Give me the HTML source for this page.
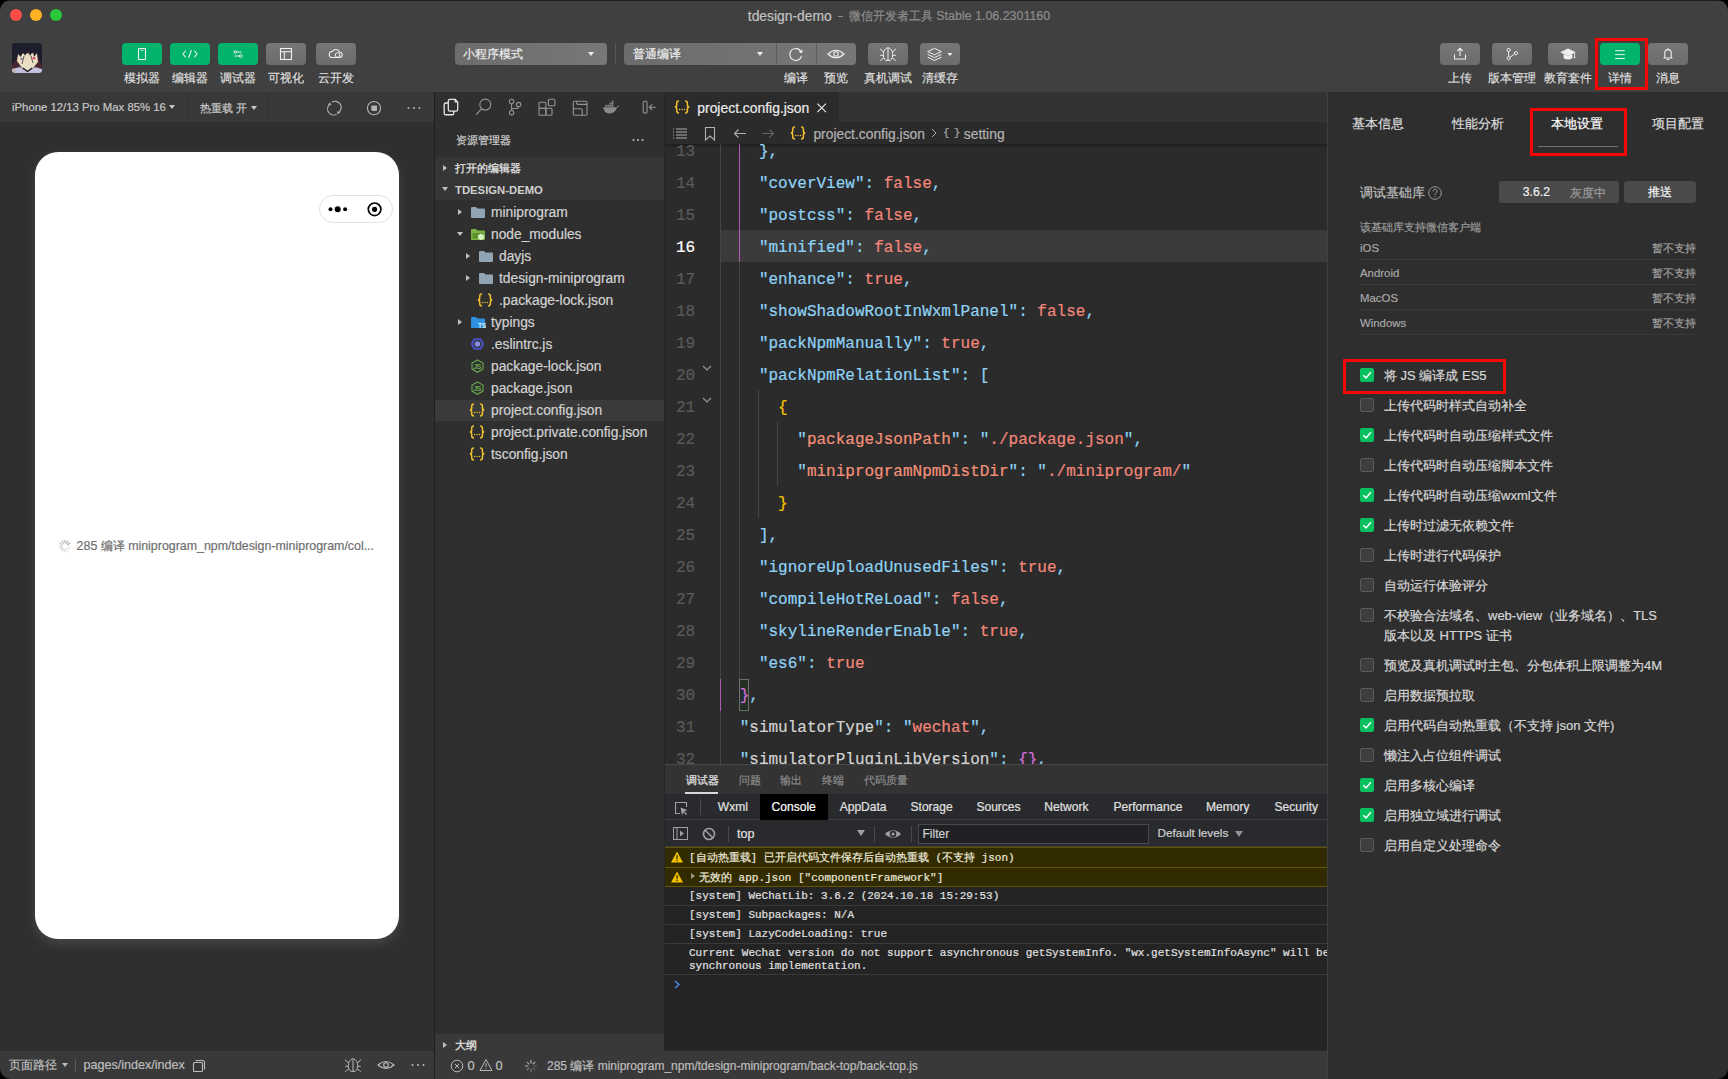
<!DOCTYPE html>
<html><head><meta charset="utf-8">
<style>
*{box-sizing:border-box;margin:0;padding:0}
html,body{width:1728px;height:1079px;overflow:hidden;background:#2e2e2e;font-family:"Liberation Sans",sans-serif;color:#d4d4d4}
.a{position:absolute}
.t{position:absolute;white-space:pre;-webkit-text-stroke:0.2px currentColor}
.m{font-family:"Liberation Mono",monospace}
</style></head><body>

<div class="a" style="left:0px;top:0px;width:1728px;height:92px;background:#404040;"></div>
<div class="a" style="left:0px;top:0px;width:1728px;height:1px;background:#1c1c1c;"></div>
<div class="a" style="left:9.8px;top:9.0px;width:12.4px;height:12.4px;border-radius:50%;background:#fe4d45"></div>
<div class="a" style="left:29.8px;top:9.0px;width:12.4px;height:12.4px;border-radius:50%;background:#feb224"></div>
<div class="a" style="left:49.8px;top:9.0px;width:12.4px;height:12.4px;border-radius:50%;background:#2ac73a"></div>
<div class="t" style="left:747.8px;top:5.8px;font-size:13.86px;line-height:20px;color:#c2c2c2;font-weight:400;letter-spacing:0px;">tdesign-demo</div>
<div class="a" style="left:838px;top:15.5px;width:5px;height:1px;background:#8d8d8d;"></div>
<div class="t" style="left:849.3px;top:6.8px;font-size:12px;line-height:18px;color:#8d8d8d;font-weight:400;letter-spacing:0px;">微信开发者工具</div>
<div class="t" style="left:936.3px;top:6.8px;font-size:12.45px;line-height:18px;color:#8d8d8d;font-weight:400;letter-spacing:0px;">Stable 1.06.2301160</div>
<svg class="a" style="left:12px;top:43px;" width="30" height="30" viewBox="0 0 30 30" fill="none"><defs><clipPath id="av"><rect width="30" height="30" rx="3"/></clipPath></defs>
<g clip-path="url(#av)"><rect width="30" height="30" fill="#46262f"/>
<path d="M6 11 L25 10 L26 19 L21 25 L15.5 28 L10 25 L5 18 Z" fill="#eadfc2"/>
<path d="M0 0 H30 V22 L27 16 L25 10 L22 14 L21 8 L18 13 L16 7 L13 13 L11 8 L9 14 L6 11 L4 17 L0 22 Z" fill="#1c1e2b"/>
<path d="M12 13 L10 21 M19 13 L21 20" stroke="#3a3440" stroke-width="0.8"/>
<ellipse cx="22" cy="15.3" rx="1.6" ry="1" fill="#ec2d72"/>
<ellipse cx="9.5" cy="15.8" rx="1.4" ry="0.9" fill="#7a68a0"/>
<path d="M0 30 V26 L8 24 L15.5 29 L23 24 L30 26 V30 Z" fill="#c4c0e0"/>
<path d="M11 25 L15.5 28.5 L20 25" stroke="#1c1e2b" stroke-width="1.2" fill="none"/>
<path d="M1 25 Q2 28 4 29" stroke="#c8a030" stroke-width="0.8" fill="none"/></g></svg>
<div class="a" style="left:122px;top:43px;width:40px;height:22px;border-radius:4px;background:#02b36b"></div>
<svg class="a" style="left:122px;top:43px;" width="40" height="22" viewBox="0 0 40 22" fill="none"><rect x="16.5" y="5.5" width="7" height="11" stroke="#f0f0f0" stroke-width="1.1" rx="0.5"/><line x1="18.5" y1="7.3" x2="21.5" y2="7.3" stroke="#f0f0f0" stroke-width="0.9"/></svg>
<div class="a" style="left:170px;top:43px;width:40px;height:22px;border-radius:4px;background:#02b36b"></div>
<svg class="a" style="left:170px;top:43px;" width="40" height="22" viewBox="0 0 40 22" fill="none"><path d="M15.5 8 L13 11 L15.5 14 M24.5 8 L27 11 L24.5 14 M21.3 7.5 L18.7 14.5" stroke="#f0f0f0" stroke-width="1.1" stroke-linecap="round"/></svg>
<div class="a" style="left:218px;top:43px;width:40px;height:22px;border-radius:4px;background:#02b36b"></div>
<svg class="a" style="left:218px;top:43px;" width="40" height="22" viewBox="0 0 40 22" fill="none"><circle cx="17.3" cy="9" r="1.3" stroke="#f0f0f0" stroke-width="1"/><line x1="18.8" y1="9" x2="23.5" y2="9" stroke="#f0f0f0" stroke-width="1"/><circle cx="22.7" cy="13" r="1.3" stroke="#f0f0f0" stroke-width="1"/><line x1="16.5" y1="13" x2="21.2" y2="13" stroke="#f0f0f0" stroke-width="1"/></svg>
<div class="a" style="left:266px;top:43px;width:40px;height:22px;border-radius:4px;background:linear-gradient(#767676,#6c6c6c)"></div>
<svg class="a" style="left:266px;top:43px;" width="40" height="22" viewBox="0 0 40 22" fill="none"><rect x="14.5" y="5.5" width="11" height="11" stroke="#f0f0f0" stroke-width="1.1"/><line x1="14.5" y1="8.7" x2="25.5" y2="8.7" stroke="#f0f0f0" stroke-width="1.1"/><line x1="18.3" y1="8.7" x2="18.3" y2="16.5" stroke="#f0f0f0" stroke-width="1.1"/></svg>
<div class="a" style="left:316px;top:43px;width:40px;height:22px;border-radius:4px;background:linear-gradient(#767676,#6c6c6c)"></div>
<svg class="a" style="left:316px;top:43px;" width="40" height="22" viewBox="0 0 40 22" fill="none"><path d="M16 14.5 a3 3 0 0 1 0.5-6 a3.8 3.8 0 0 1 7 0.8 a2.6 2.6 0 0 1 0.2 5.2 Z" stroke="#f0f0f0" stroke-width="1.1"/><circle cx="21.5" cy="12" r="2.3" stroke="#f0f0f0" stroke-width="1"/></svg>
<div class="t" style="left:82.0px;width:120px;text-align:center;top:69.0px;font-size:12px;line-height:18px;color:#dedede;font-weight:400;letter-spacing:0px;">模拟器</div>
<div class="t" style="left:130.0px;width:120px;text-align:center;top:69.0px;font-size:12px;line-height:18px;color:#dedede;font-weight:400;letter-spacing:0px;">编辑器</div>
<div class="t" style="left:178.0px;width:120px;text-align:center;top:69.0px;font-size:12px;line-height:18px;color:#dedede;font-weight:400;letter-spacing:0px;">调试器</div>
<div class="t" style="left:226.0px;width:120px;text-align:center;top:69.0px;font-size:12px;line-height:18px;color:#dedede;font-weight:400;letter-spacing:0px;">可视化</div>
<div class="t" style="left:276.0px;width:120px;text-align:center;top:69.0px;font-size:12px;line-height:18px;color:#dedede;font-weight:400;letter-spacing:0px;">云开发</div>
<div class="a" style="left:455px;top:43px;width:152px;height:22px;border-radius:4px;background:linear-gradient(90deg,#6c6c6c,#777777)"></div>
<div class="t" style="left:463px;top:45.0px;font-size:12px;line-height:18px;color:#ececec;font-weight:400;letter-spacing:0px;">小程序模式</div>
<div class="a" style="left:588px;top:52px;width:0;height:0;border-left:3.5px solid transparent;border-right:3.5px solid transparent;border-top:4px solid #eee"></div>
<div class="a" style="left:615px;top:43px;width:1px;height:22px;background:#565656;"></div>
<div class="a" style="left:624px;top:43px;width:232px;height:22px;border-radius:4px;background:linear-gradient(90deg,#6c6c6c,#777777)"></div>
<div class="a" style="left:776px;top:43px;width:1px;height:22px;background:#5e5e5e;"></div>
<div class="a" style="left:816px;top:43px;width:1px;height:22px;background:#5e5e5e;"></div>
<div class="t" style="left:632.5px;top:45.0px;font-size:12px;line-height:18px;color:#ececec;font-weight:400;letter-spacing:0px;">普通编译</div>
<div class="a" style="left:757px;top:52px;width:0;height:0;border-left:3.5px solid transparent;border-right:3.5px solid transparent;border-top:4px solid #eee"></div>
<svg class="a" style="left:776px;top:43px;" width="40" height="22" viewBox="0 0 40 22" fill="none"><path d="M25.3 9.2 A6 6 0 1 0 25.6 12.8" stroke="#f0f0f0" stroke-width="1.1"/><path d="M23.2 8.6 L25.6 9.4 L26 6.8" stroke="#f0f0f0" stroke-width="1.1"/></svg>
<svg class="a" style="left:816px;top:43px;" width="40" height="22" viewBox="0 0 40 22" fill="none"><path d="M12 11 Q20 3.5 28 11 Q20 18.5 12 11 Z" stroke="#f0f0f0" stroke-width="1.1"/><circle cx="20" cy="11" r="2.2" stroke="#f0f0f0" stroke-width="1.1"/></svg>
<div class="a" style="left:868px;top:43px;width:40px;height:22px;border-radius:4px;background:linear-gradient(#767676,#6c6c6c)"></div>
<svg class="a" style="left:868px;top:43px;" width="40" height="22" viewBox="0 0 40 22" fill="none"><path d="M20 4.6 Q15.3 6.2 15.3 11.5 Q15.3 17.6 20 17.6 Q24.7 17.6 24.7 11.5 Q24.7 6.2 20 4.6 Z" stroke="#f0f0f0" stroke-width="1"/><line x1="20" y1="5.5" x2="20" y2="17" stroke="#f0f0f0" stroke-width="1"/><path d="M15.6 8.6 L13.3 7.3 L12.3 5.6 M24.4 8.6 L26.7 7.3 L27.7 5.6 M15.2 12.3 H12.2 M24.8 12.3 H27.8 M15.6 15.3 L13.4 16.5 L12.3 17.8 M24.4 15.3 L26.6 16.5 L27.7 17.8" stroke="#f0f0f0" stroke-width="1"/></svg>
<div class="a" style="left:920px;top:43px;width:40px;height:22px;border-radius:4px;background:linear-gradient(#767676,#6c6c6c)"></div>
<svg class="a" style="left:920px;top:43px;" width="40" height="22" viewBox="0 0 40 22" fill="none"><path d="M14.5 5.4 L21.3 8.6 L14.5 11.8 L7.7 8.6 Z" stroke="#f0f0f0" stroke-width="1"/><path d="M7.7 11.4 L14.5 14.6 L21.3 11.4 M7.7 14.2 L14.5 17.4 L21.3 14.2" stroke="#f0f0f0" stroke-width="1"/><path d="M27.3 10 h5.2 l-2.6 3 z" fill="#f0f0f0"/></svg>
<div class="t" style="left:736.0px;width:120px;text-align:center;top:69.0px;font-size:12px;line-height:18px;color:#dedede;font-weight:400;letter-spacing:0px;">编译</div>
<div class="t" style="left:776.0px;width:120px;text-align:center;top:69.0px;font-size:12px;line-height:18px;color:#dedede;font-weight:400;letter-spacing:0px;">预览</div>
<div class="t" style="left:828.0px;width:120px;text-align:center;top:69.0px;font-size:12px;line-height:18px;color:#dedede;font-weight:400;letter-spacing:0px;">真机调试</div>
<div class="t" style="left:880.0px;width:120px;text-align:center;top:69.0px;font-size:12px;line-height:18px;color:#dedede;font-weight:400;letter-spacing:0px;">清缓存</div>
<div class="a" style="left:1440px;top:43px;width:40px;height:22px;border-radius:4px;background:linear-gradient(#767676,#6c6c6c)"></div>
<svg class="a" style="left:1440px;top:43px;" width="40" height="22" viewBox="0 0 40 22" fill="none"><path d="M14.5 11.5 v4.5 h11 v-4.5" stroke="#f0f0f0" stroke-width="1.1"/><path d="M20 13 V5.5 M17.3 8 L20 5.3 L22.7 8" stroke="#f0f0f0" stroke-width="1.1"/></svg>
<div class="a" style="left:1492px;top:43px;width:40px;height:22px;border-radius:4px;background:linear-gradient(#767676,#6c6c6c)"></div>
<svg class="a" style="left:1492px;top:43px;" width="40" height="22" viewBox="0 0 40 22" fill="none"><circle cx="16.6" cy="6.9" r="1.6" stroke="#f0f0f0" stroke-width="1"/><circle cx="16.6" cy="15.3" r="1.6" stroke="#f0f0f0" stroke-width="1"/><circle cx="23.9" cy="10.2" r="1.6" stroke="#f0f0f0" stroke-width="1"/><path d="M16.6 8.5 V13.7 M17.9 14.4 L22.6 11.1" stroke="#f0f0f0" stroke-width="1"/></svg>
<div class="a" style="left:1548px;top:43px;width:40px;height:22px;border-radius:4px;background:linear-gradient(#767676,#6c6c6c)"></div>
<svg class="a" style="left:1548px;top:43px;" width="40" height="22" viewBox="0 0 40 22" fill="none"><path d="M12.2 9.3 L20 5.6 L27.8 9.3 L20 13 Z" fill="#f0f0f0"/><path d="M15.6 11 v4.3 q4.4 2.6 8.8 0 v-4.3 l-4.4 2.1 z" fill="#f0f0f0"/><path d="M26.6 9.8 v4.2" stroke="#f0f0f0" stroke-width="0.9"/><circle cx="26.6" cy="14.4" r="0.8" fill="#f0f0f0"/></svg>
<div class="a" style="left:1600px;top:43px;width:40px;height:22px;border-radius:4px;background:#02b36b"></div>
<svg class="a" style="left:1600px;top:43px;" width="40" height="22" viewBox="0 0 40 22" fill="none"><path d="M15.1 7.7 h9.7 M15.1 11.6 h9.7 M15.1 15.5 h9.7" stroke="#f0f0f0" stroke-width="1"/></svg>
<div class="a" style="left:1648px;top:43px;width:40px;height:22px;border-radius:4px;background:linear-gradient(#767676,#6c6c6c)"></div>
<svg class="a" style="left:1648px;top:43px;" width="40" height="22" viewBox="0 0 40 22" fill="none"><path d="M15.5 15 h9 M16.8 15 v-5 a3.2 3.4 0 0 1 6.4 0 v5" stroke="#f0f0f0" stroke-width="1.1"/><path d="M18.8 16.5 h2.4" stroke="#f0f0f0" stroke-width="1.1"/><line x1="20" y1="5.3" x2="20" y2="6.6" stroke="#f0f0f0" stroke-width="1"/></svg>
<div class="t" style="left:1400.0px;width:120px;text-align:center;top:69.0px;font-size:12px;line-height:18px;color:#dedede;font-weight:400;letter-spacing:0px;">上传</div>
<div class="t" style="left:1452.0px;width:120px;text-align:center;top:69.0px;font-size:12px;line-height:18px;color:#dedede;font-weight:400;letter-spacing:0px;">版本管理</div>
<div class="t" style="left:1508.0px;width:120px;text-align:center;top:69.0px;font-size:12px;line-height:18px;color:#dedede;font-weight:400;letter-spacing:0px;">教育套件</div>
<div class="t" style="left:1560.0px;width:120px;text-align:center;top:69.0px;font-size:12px;line-height:18px;color:#dedede;font-weight:400;letter-spacing:0px;">详情</div>
<div class="t" style="left:1608.0px;width:120px;text-align:center;top:69.0px;font-size:12px;line-height:18px;color:#dedede;font-weight:400;letter-spacing:0px;">消息</div>
<div class="a" style="left:1595px;top:38px;width:53px;height:52px;border:3px solid #f70505"></div>
<div class="a" style="left:0px;top:92px;width:434px;height:987px;background:#2f2f2f;"></div>
<div class="a" style="left:0px;top:92px;width:434px;height:30px;background:#383838;"></div>
<div class="a" style="left:188px;top:92px;width:1px;height:30px;background:#333333;"></div>
<div class="a" style="left:267px;top:92px;width:1px;height:30px;background:#333333;"></div>
<div class="t" style="left:12px;top:98.5px;font-size:11.35px;line-height:17px;color:#c8c8c8;font-weight:400;letter-spacing:0px;">iPhone 12/13 Pro Max 85% 16</div>
<div class="a" style="left:169px;top:105px;width:0;height:0;border-left:3.5px solid transparent;border-right:3.5px solid transparent;border-top:4px solid #c8c8c8"></div>
<div class="t" style="left:200px;top:99.5px;font-size:11px;line-height:16px;color:#c8c8c8;font-weight:400;letter-spacing:0px;">热重载 开</div>
<div class="a" style="left:250.5px;top:105.5px;width:0;height:0;border-left:3.5px solid transparent;border-right:3.5px solid transparent;border-top:4px solid #c8c8c8"></div>
<svg class="a" style="left:324px;top:98px;" width="20" height="20" viewBox="0 0 20 20" fill="none"><path d="M7.8 4.2 A6.1 6.1 0 0 1 14.9 14.1 M12.6 16.3 A6.1 6.1 0 0 1 5.5 6.5" stroke="#b4b4b4" stroke-width="1.1"/><path d="M14.2 16.2 L12.6 13.6 L16.4 13.9 Z M5.8 4.4 L7.6 6.9 L3.9 6.8 Z" fill="#b4b4b4"/></svg>
<svg class="a" style="left:364px;top:98px;" width="20" height="20" viewBox="0 0 20 20" fill="none"><circle cx="10" cy="10.1" r="6.6" stroke="#b4b4b4" stroke-width="1.1"/><rect x="7.3" y="7.6" width="5.7" height="5.3" rx="0.8" fill="#b4b4b4"/></svg>
<svg class="a" style="left:404px;top:98px;" width="20" height="20" viewBox="0 0 20 20" fill="none"><circle cx="4.5" cy="10" r="1" fill="#b4b4b4"/><circle cx="10" cy="10" r="1" fill="#b4b4b4"/><circle cx="15.5" cy="10" r="1" fill="#b4b4b4"/></svg>
<div class="a" style="left:434px;top:92px;width:1px;height:987px;background:#1f1f1f;"></div>
<div class="a" style="left:35px;top:152px;width:364px;height:787px;border-radius:23px;background:#ffffff;box-shadow:0 5px 11px rgba(255,255,255,0.11)"></div>
<div class="a" style="left:319px;top:195px;width:74px;height:28px;border-radius:14px;border:1px solid #e3e3e3;background:#fff"></div>
<svg class="a" style="left:319px;top:195px;" width="74" height="28" viewBox="0 0 74 28" fill="none"><circle cx="11.5" cy="14.3" r="2" fill="#000"/><circle cx="18.7" cy="14.3" r="3" fill="#000"/><circle cx="26.1" cy="14.3" r="2" fill="#000"/><circle cx="55.6" cy="14.3" r="6.3" stroke="#000" stroke-width="1.7"/><circle cx="55.6" cy="14.3" r="2.6" fill="#000"/></svg>
<svg class="a" style="left:55.3px;top:535.7px;" width="20" height="20" viewBox="0 0 20 20" fill="none"><line x1="13.20" y1="10.00" x2="15.60" y2="10.00" stroke="rgba(0,0,0,0.08)" stroke-width="1.2" stroke-linecap="round"/><line x1="12.77" y1="11.60" x2="14.85" y2="12.80" stroke="rgba(0,0,0,0.11)" stroke-width="1.2" stroke-linecap="round"/><line x1="11.60" y1="12.77" x2="12.80" y2="14.85" stroke="rgba(0,0,0,0.13)" stroke-width="1.2" stroke-linecap="round"/><line x1="10.00" y1="13.20" x2="10.00" y2="15.60" stroke="rgba(0,0,0,0.16)" stroke-width="1.2" stroke-linecap="round"/><line x1="8.40" y1="12.77" x2="7.20" y2="14.85" stroke="rgba(0,0,0,0.18)" stroke-width="1.2" stroke-linecap="round"/><line x1="7.23" y1="11.60" x2="5.15" y2="12.80" stroke="rgba(0,0,0,0.21)" stroke-width="1.2" stroke-linecap="round"/><line x1="6.80" y1="10.00" x2="4.40" y2="10.00" stroke="rgba(0,0,0,0.23)" stroke-width="1.2" stroke-linecap="round"/><line x1="7.23" y1="8.40" x2="5.15" y2="7.20" stroke="rgba(0,0,0,0.26)" stroke-width="1.2" stroke-linecap="round"/><line x1="8.40" y1="7.23" x2="7.20" y2="5.15" stroke="rgba(0,0,0,0.28)" stroke-width="1.2" stroke-linecap="round"/><line x1="10.00" y1="6.80" x2="10.00" y2="4.40" stroke="rgba(0,0,0,0.30)" stroke-width="1.2" stroke-linecap="round"/><line x1="11.60" y1="7.23" x2="12.80" y2="5.15" stroke="rgba(0,0,0,0.33)" stroke-width="1.2" stroke-linecap="round"/><line x1="12.77" y1="8.40" x2="14.85" y2="7.20" stroke="rgba(0,0,0,0.36)" stroke-width="1.2" stroke-linecap="round"/></svg>
<div class="t" style="left:76.6px;top:536.7px;font-size:12.4px;line-height:18px;color:#6f6f6f;font-weight:400;letter-spacing:0px;">285 编译 miniprogram_npm/tdesign-miniprogram/col...</div>
<div class="a" style="left:0px;top:1051px;width:434px;height:28px;background:#393939;"></div>
<div class="t" style="left:8.7px;top:1056.0px;font-size:12px;line-height:18px;color:#bdbdbd;font-weight:400;letter-spacing:0px;">页面路径</div>
<div class="a" style="left:62px;top:1063px;width:0;height:0;border-left:3.5px solid transparent;border-right:3.5px solid transparent;border-top:4px solid #bdbdbd"></div>
<div class="a" style="left:75px;top:1059px;width:1px;height:13px;background:#5a5a5a;"></div>
<div class="t" style="left:83.5px;top:1056.0px;font-size:12.58px;line-height:18px;color:#bdbdbd;font-weight:400;letter-spacing:0px;">pages/index/index</div>
<svg class="a" style="left:190px;top:1057px;" width="16" height="16" viewBox="0 0 16 16" fill="none"><rect x="3.5" y="5.5" width="9" height="9" rx="1" stroke="#bdbdbd" stroke-width="1.1"/><path d="M5.5 3.5 h7 a2 2 0 0 1 2 2 v7" stroke="#bdbdbd" stroke-width="1.1"/></svg>
<svg class="a" style="left:333px;top:1054px;" width="40" height="22" viewBox="0 0 40 22" fill="none"><path d="M20 4.6 Q15.3 6.2 15.3 11.5 Q15.3 17.6 20 17.6 Q24.7 17.6 24.7 11.5 Q24.7 6.2 20 4.6 Z" stroke="#b4b4b4" stroke-width="1"/><line x1="20" y1="5.5" x2="20" y2="17" stroke="#b4b4b4" stroke-width="1"/><path d="M15.6 8.6 L13.3 7.3 L12.3 5.6 M24.4 8.6 L26.7 7.3 L27.7 5.6 M15.2 12.3 H12.2 M24.8 12.3 H27.8 M15.6 15.3 L13.4 16.5 L12.3 17.8 M24.4 15.3 L26.6 16.5 L27.7 17.8" stroke="#b4b4b4" stroke-width="1"/></svg>
<svg class="a" style="left:376px;top:1055px;" width="20" height="20" viewBox="0 0 20 20" fill="none"><path d="M2 10 Q10 3 18 10 Q10 17 2 10 Z" stroke="#bdbdbd" stroke-width="1.1"/><circle cx="10" cy="10" r="2.3" stroke="#bdbdbd" stroke-width="1.1"/></svg>
<svg class="a" style="left:408px;top:1055px;" width="20" height="20" viewBox="0 0 20 20" fill="none"><circle cx="4.5" cy="10" r="1" fill="#bdbdbd"/><circle cx="10" cy="10" r="1" fill="#bdbdbd"/><circle cx="15.5" cy="10" r="1" fill="#bdbdbd"/></svg>
<div class="a" style="left:435px;top:92px;width:229px;height:987px;background:#2f2f2f;"></div>
<div class="a" style="left:435px;top:92px;width:229px;height:30px;background:#2f2f2f;"></div>
<svg class="a" style="left:435px;top:92px;" width="229" height="30" viewBox="0 0 229 30" fill="none"><path d="M13.3 9 Q13.3 7.4 14.9 7.4 H20.2 L22.7 9.9 V17.5 Q22.7 19.1 21.1 19.1 H14.9 Q13.3 19.1 13.3 17.5 Z M20.2 7.4 V9.9 H22.7" stroke="#e6e6e6" stroke-width="1.3"/>
<path d="M13.3 11 H10.8 Q9.2 11 9.2 12.6 V21.15 Q9.2 22.75 10.8 22.75 H17.2 Q18.8 22.75 18.8 21.15 V19.1" stroke="#e6e6e6" stroke-width="1.3"/>
<circle cx="50.3" cy="12.6" r="5.5" stroke="#959595" stroke-width="1.1"/><path d="M46.7 16.8 L41.2 22.5" stroke="#959595" stroke-width="1.1"/>
<circle cx="76.6" cy="9.5" r="2.2" stroke="#959595" stroke-width="1.1"/><circle cx="76.6" cy="20.7" r="2.2" stroke="#959595" stroke-width="1.1"/><circle cx="83.6" cy="12.6" r="2.2" stroke="#959595" stroke-width="1.1"/>
<path d="M76.6 11.7 V18.5 M83.6 14.8 Q83.6 16.5 81.5 16.5 H78.5 Q76.6 16.5 76.6 18.5" stroke="#959595" stroke-width="1.1"/>
<rect x="104" y="10.2" width="6.9" height="6.1" rx="1" stroke="#959595" stroke-width="1.1"/><rect x="104" y="16.3" width="6.9" height="6.9" rx="1" stroke="#959595" stroke-width="1.1"/><rect x="110.9" y="16.3" width="6.1" height="6.9" rx="1" stroke="#959595" stroke-width="1.1"/><rect x="113.4" y="7.3" width="6.5" height="6.5" rx="1" stroke="#959595" stroke-width="1.1"/>
<rect x="138.3" y="9.2" width="13.7" height="14" rx="1.2" stroke="#959595" stroke-width="1.1"/><path d="M141.6 9.2 V10.7 Q141.6 12.4 143.3 12.4 H152 M138.3 16.8 H146 Q147.2 16.8 147.2 18.2 V23.2" stroke="#959595" stroke-width="1.1"/>
<path d="M168.2 15.2 H181.6 Q182.5 13.5 184.2 13.8 Q183.6 15.3 182 15.6 Q180.5 21.4 174.5 21.4 Q169 21.4 168.2 15.2 Z" fill="#8a8a8a"/>
<rect x="170.3" y="12.9" width="1.8" height="1.8" fill="#8a8a8a"/><rect x="172.4" y="12.9" width="1.8" height="1.8" fill="#8a8a8a"/><rect x="174.5" y="12.9" width="1.8" height="1.8" fill="#8a8a8a"/><rect x="176.6" y="12.9" width="1.8" height="1.8" fill="#8a8a8a"/><rect x="174.5" y="10.8" width="1.8" height="1.8" fill="#8a8a8a"/><rect x="176.6" y="10.8" width="1.8" height="1.8" fill="#8a8a8a"/><rect x="176.6" y="8.7" width="1.8" height="1.8" fill="#8a8a8a"/>
<rect x="208.2" y="9.2" width="3.8" height="11.8" rx="1" stroke="#959595" stroke-width="1.1"/><path d="M220.8 15.2 H214.3 M217.2 12.3 L214.3 15.2 L217.2 18.1" stroke="#959595" stroke-width="1.1"/></svg>
<div class="t" style="left:455.5px;top:132.0px;font-size:11px;line-height:16px;color:#d0d0d0;font-weight:400;letter-spacing:0px;">资源管理器</div>
<svg class="a" style="left:628px;top:130px;" width="20" height="20" viewBox="0 0 20 20" fill="none"><circle cx="5.5" cy="10" r="1" fill="#c4c4c4"/><circle cx="10" cy="10" r="1" fill="#c4c4c4"/><circle cx="14.5" cy="10" r="1" fill="#c4c4c4"/></svg>
<div class="a" style="left:435px;top:157px;width:229px;height:43px;background:#363636;"></div>
<div class="a" style="left:443px;top:164.5px;width:0;height:0;border-top:3.5px solid transparent;border-bottom:3.5px solid transparent;border-left:4.5px solid #c0c0c0"></div>
<div class="t" style="left:455px;top:160.0px;font-size:11px;line-height:16px;color:#d4d4d4;font-weight:700;letter-spacing:0px;-webkit-text-stroke:0;">打开的编辑器</div>
<div class="a" style="left:442px;top:187px;width:0;height:0;border-left:3.5px solid transparent;border-right:3.5px solid transparent;border-top:4.5px solid #c0c0c0"></div>
<div class="t" style="left:455px;top:181.5px;font-size:11.3px;line-height:16px;color:#cfcfcf;font-weight:700;letter-spacing:0px;-webkit-text-stroke:0;">TDESIGN-DEMO</div>
<div class="a" style="left:435px;top:400px;width:229px;height:21px;background:#3a3a3a;"></div>
<div class="a" style="left:458px;top:208.5px;width:0;height:0;border-top:3.5px solid transparent;border-bottom:3.5px solid transparent;border-left:4.5px solid #c0c0c0"></div>
<svg class="a" style="left:470px;top:205px;" width="16" height="14" viewBox="0 0 16 14" fill="none"><path d="M1 3 a1 1 0 0 1 1-1 h4 l1.5 1.5 h6.5 a1 1 0 0 1 1 1 v7.5 a1 1 0 0 1 -1 1 h-12 a1 1 0 0 1 -1 -1 Z" fill="#90a4b4"/></svg>
<div class="t" style="left:491px;top:203.0px;font-size:13.8px;line-height:20px;color:#d2d2d2;font-weight:400;letter-spacing:0px;">miniprogram</div>
<div class="a" style="left:457px;top:232px;width:0;height:0;border-left:3.5px solid transparent;border-right:3.5px solid transparent;border-top:4.5px solid #c0c0c0"></div>
<svg class="a" style="left:470px;top:227px;" width="16" height="14" viewBox="0 0 16 14" fill="none"><path d="M1 3 a1 1 0 0 1 1-1 h4 l1.5 1.5 h6.5 a1 1 0 0 1 1 1 v7.5 a1 1 0 0 1 -1 1 h-12 a1 1 0 0 1 -1 -1 Z" fill="#7cb342"/><path d="M2.5 6 h11 v5.5 h-11z" fill="#5d8f2f"/><path d="M11 6.5 l3 1.7 v3.4 l-3 1.7 l-3-1.7 v-3.4 Z" fill="#d9f0c0"/></svg>
<div class="t" style="left:491px;top:225.0px;font-size:13.8px;line-height:20px;color:#d2d2d2;font-weight:400;letter-spacing:0px;">node_modules</div>
<div class="a" style="left:466px;top:252.5px;width:0;height:0;border-top:3.5px solid transparent;border-bottom:3.5px solid transparent;border-left:4.5px solid #c0c0c0"></div>
<svg class="a" style="left:478px;top:249px;" width="16" height="14" viewBox="0 0 16 14" fill="none"><path d="M1 3 a1 1 0 0 1 1-1 h4 l1.5 1.5 h6.5 a1 1 0 0 1 1 1 v7.5 a1 1 0 0 1 -1 1 h-12 a1 1 0 0 1 -1 -1 Z" fill="#90a4b4"/></svg>
<div class="t" style="left:499px;top:247.0px;font-size:13.8px;line-height:20px;color:#d2d2d2;font-weight:400;letter-spacing:0px;">dayjs</div>
<div class="a" style="left:466px;top:274.5px;width:0;height:0;border-top:3.5px solid transparent;border-bottom:3.5px solid transparent;border-left:4.5px solid #c0c0c0"></div>
<svg class="a" style="left:478px;top:271px;" width="16" height="14" viewBox="0 0 16 14" fill="none"><path d="M1 3 a1 1 0 0 1 1-1 h4 l1.5 1.5 h6.5 a1 1 0 0 1 1 1 v7.5 a1 1 0 0 1 -1 1 h-12 a1 1 0 0 1 -1 -1 Z" fill="#90a4b4"/></svg>
<div class="t" style="left:499px;top:269.0px;font-size:13.8px;line-height:20px;color:#d2d2d2;font-weight:400;letter-spacing:0px;">tdesign-miniprogram</div>
<svg class="a" style="left:476.5px;top:293px;" width="17" height="14" viewBox="0 0 17 14" fill="none"><path d="M5 1 Q2.7 1 2.7 3.2 V5.1 Q2.7 7 0.8 7 Q2.7 7 2.7 8.9 V10.8 Q2.7 13 5 13 M11.1 1 Q13.4 1 13.4 3.2 V5.1 Q13.4 7 15.3 7 Q13.4 7 13.4 8.9 V10.8 Q13.4 13 11.1 13" stroke="#f2c12e" stroke-width="1.5" fill="none"/><circle cx="5.6" cy="9.6" r="0.75" fill="#f2c12e"/><circle cx="8.05" cy="9.6" r="0.75" fill="#f2c12e"/><circle cx="10.5" cy="9.6" r="0.75" fill="#f2c12e"/></svg>
<div class="t" style="left:499px;top:291.0px;font-size:13.8px;line-height:20px;color:#d2d2d2;font-weight:400;letter-spacing:0px;">.package-lock.json</div>
<div class="a" style="left:458px;top:318.5px;width:0;height:0;border-top:3.5px solid transparent;border-bottom:3.5px solid transparent;border-left:4.5px solid #c0c0c0"></div>
<svg class="a" style="left:470px;top:315px;" width="16" height="14" viewBox="0 0 16 14" fill="none"><path d="M1 3 a1 1 0 0 1 1-1 h4 l1.5 1.5 h6.5 a1 1 0 0 1 1 1 v7.5 a1 1 0 0 1 -1 1 h-12 a1 1 0 0 1 -1 -1 Z" fill="#2f8fe0"/><text x="8" y="12.5" font-size="6.5" font-family="Liberation Sans" font-weight="700" fill="#dfefff">TS</text></svg>
<div class="t" style="left:491px;top:313.0px;font-size:13.8px;line-height:20px;color:#d2d2d2;font-weight:400;letter-spacing:0px;">typings</div>
<svg class="a" style="left:470px;top:337px;" width="16" height="14" viewBox="0 0 16 14" fill="none"><path d="M1.8 7 L4.6 2.2 H10.4 L13.2 7 L10.4 11.8 H4.6 Z" stroke="#4650c8" stroke-width="2" fill="none"/><path d="M4.4 7 L5.9 4.4 H9.1 L10.6 7 L9.1 9.6 H5.9 Z" fill="#8990e4"/></svg>
<div class="t" style="left:491px;top:335.0px;font-size:13.8px;line-height:20px;color:#d2d2d2;font-weight:400;letter-spacing:0px;">.eslintrc.js</div>
<svg class="a" style="left:470px;top:359px;" width="16" height="14" viewBox="0 0 16 14" fill="none"><path d="M7.5 0.9 L13 4.1 V10.1 L7.5 13.3 L2 10.1 V4.1 Z" stroke="#6aa84f" stroke-width="1.1" fill="none"/><text x="3.2" y="10.2" font-size="7.2" font-family="Liberation Sans" font-weight="700" fill="#6aa84f" letter-spacing="-0.6">JS</text></svg>
<div class="t" style="left:491px;top:357.0px;font-size:13.8px;line-height:20px;color:#d2d2d2;font-weight:400;letter-spacing:0px;">package-lock.json</div>
<svg class="a" style="left:470px;top:381px;" width="16" height="14" viewBox="0 0 16 14" fill="none"><path d="M7.5 0.9 L13 4.1 V10.1 L7.5 13.3 L2 10.1 V4.1 Z" stroke="#6aa84f" stroke-width="1.1" fill="none"/><text x="3.2" y="10.2" font-size="7.2" font-family="Liberation Sans" font-weight="700" fill="#6aa84f" letter-spacing="-0.6">JS</text></svg>
<div class="t" style="left:491px;top:379.0px;font-size:13.8px;line-height:20px;color:#d2d2d2;font-weight:400;letter-spacing:0px;">package.json</div>
<svg class="a" style="left:468.5px;top:403px;" width="17" height="14" viewBox="0 0 17 14" fill="none"><path d="M5 1 Q2.7 1 2.7 3.2 V5.1 Q2.7 7 0.8 7 Q2.7 7 2.7 8.9 V10.8 Q2.7 13 5 13 M11.1 1 Q13.4 1 13.4 3.2 V5.1 Q13.4 7 15.3 7 Q13.4 7 13.4 8.9 V10.8 Q13.4 13 11.1 13" stroke="#f2c12e" stroke-width="1.5" fill="none"/><circle cx="5.6" cy="9.6" r="0.75" fill="#f2c12e"/><circle cx="8.05" cy="9.6" r="0.75" fill="#f2c12e"/><circle cx="10.5" cy="9.6" r="0.75" fill="#f2c12e"/></svg>
<div class="t" style="left:491px;top:401.0px;font-size:13.8px;line-height:20px;color:#d2d2d2;font-weight:400;letter-spacing:0px;">project.config.json</div>
<svg class="a" style="left:468.5px;top:425px;" width="17" height="14" viewBox="0 0 17 14" fill="none"><path d="M5 1 Q2.7 1 2.7 3.2 V5.1 Q2.7 7 0.8 7 Q2.7 7 2.7 8.9 V10.8 Q2.7 13 5 13 M11.1 1 Q13.4 1 13.4 3.2 V5.1 Q13.4 7 15.3 7 Q13.4 7 13.4 8.9 V10.8 Q13.4 13 11.1 13" stroke="#f2c12e" stroke-width="1.5" fill="none"/><circle cx="5.6" cy="9.6" r="0.75" fill="#f2c12e"/><circle cx="8.05" cy="9.6" r="0.75" fill="#f2c12e"/><circle cx="10.5" cy="9.6" r="0.75" fill="#f2c12e"/></svg>
<div class="t" style="left:491px;top:423.0px;font-size:13.8px;line-height:20px;color:#d2d2d2;font-weight:400;letter-spacing:0px;">project.private.config.json</div>
<svg class="a" style="left:468.5px;top:447px;" width="17" height="14" viewBox="0 0 17 14" fill="none"><path d="M5 1 Q2.7 1 2.7 3.2 V5.1 Q2.7 7 0.8 7 Q2.7 7 2.7 8.9 V10.8 Q2.7 13 5 13 M11.1 1 Q13.4 1 13.4 3.2 V5.1 Q13.4 7 15.3 7 Q13.4 7 13.4 8.9 V10.8 Q13.4 13 11.1 13" stroke="#f2c12e" stroke-width="1.5" fill="none"/><circle cx="5.6" cy="9.6" r="0.75" fill="#f2c12e"/><circle cx="8.05" cy="9.6" r="0.75" fill="#f2c12e"/><circle cx="10.5" cy="9.6" r="0.75" fill="#f2c12e"/></svg>
<div class="t" style="left:491px;top:445.0px;font-size:13.8px;line-height:20px;color:#d2d2d2;font-weight:400;letter-spacing:0px;">tsconfig.json</div>
<div class="a" style="left:435px;top:1034px;width:229px;height:17px;background:#393939;"></div>
<div class="a" style="left:443px;top:1041.5px;width:0;height:0;border-top:3.5px solid transparent;border-bottom:3.5px solid transparent;border-left:4.5px solid #c0c0c0"></div>
<div class="t" style="left:455px;top:1037.0px;font-size:11px;line-height:16px;color:#d4d4d4;font-weight:700;letter-spacing:0px;-webkit-text-stroke:0;">大纲</div>
<div class="a" style="left:664px;top:92px;width:1px;height:958px;background:#262626;"></div>
<div class="a" style="left:665px;top:92px;width:662px;height:672px;background:#2b2b2b;"></div>
<div class="a" style="left:665px;top:92px;width:662px;height:30px;background:#333333;"></div>
<div class="a" style="left:665px;top:92px;width:174px;height:30px;background:#2b2b2b;"></div>
<svg class="a" style="left:674.2px;top:100.3px;" width="17" height="14" viewBox="0 0 17 14" fill="none"><path d="M5 1 Q2.7 1 2.7 3.2 V5.1 Q2.7 7 0.8 7 Q2.7 7 2.7 8.9 V10.8 Q2.7 13 5 13 M11.1 1 Q13.4 1 13.4 3.2 V5.1 Q13.4 7 15.3 7 Q13.4 7 13.4 8.9 V10.8 Q13.4 13 11.1 13" stroke="#f2c12e" stroke-width="1.5" fill="none"/><circle cx="5.6" cy="9.6" r="0.75" fill="#f2c12e"/><circle cx="8.05" cy="9.6" r="0.75" fill="#f2c12e"/><circle cx="10.5" cy="9.6" r="0.75" fill="#f2c12e"/></svg>
<div class="t" style="left:697.3px;top:98.0px;font-size:13.9px;line-height:20px;color:#ececec;font-weight:400;letter-spacing:0px;">project.config.json</div>
<svg class="a" style="left:814px;top:100px;" width="14" height="14" viewBox="0 0 14 14" fill="none"><path d="M3.4 3.6 L12 12.1 M12 3.6 L3.4 12.1" stroke="#e8e8e8" stroke-width="1.2"/></svg>
<div class="a" style="left:665px;top:122px;width:662px;height:22px;background:#2b2b2b;"></div>
<div class="a" style="left:665px;top:144px;width:662px;height:4px;background:linear-gradient(rgba(0,0,0,0.35),rgba(0,0,0,0))"></div>
<svg class="a" style="left:670px;top:125px;" width="20" height="16" viewBox="0 0 20 16" fill="none"><path d="M6 4 h11 M6 7 h11 M6 10 h11 M6 13 h11" stroke="#b0b0b0" stroke-width="1"/><path d="M3 4 h1 M3 7 h1 M3 10 h1 M3 13 h1" stroke="#b0b0b0" stroke-width="1"/></svg>
<svg class="a" style="left:702px;top:125px;" width="16" height="18" viewBox="0 0 16 18" fill="none"><path d="M3.5 2.5 h9 v12.5 l-4.5 -4 l-4.5 4 Z" stroke="#b0b0b0" stroke-width="1.1"/></svg>
<svg class="a" style="left:731px;top:125px;" width="18" height="16" viewBox="0 0 18 16" fill="none"><path d="M15 8.5 H3.5 M7.5 4.5 L3.5 8.5 L7.5 12.5" stroke="#b0b0b0" stroke-width="1.1"/></svg>
<svg class="a" style="left:759px;top:125px;" width="18" height="16" viewBox="0 0 18 16" fill="none"><path d="M3 8.5 H14.5 M10.5 4.5 L14.5 8.5 L10.5 12.5" stroke="#666" stroke-width="1.1"/></svg>
<svg class="a" style="left:790px;top:126px;" width="17" height="14" viewBox="0 0 17 14" fill="none"><path d="M5 1 Q2.7 1 2.7 3.2 V5.1 Q2.7 7 0.8 7 Q2.7 7 2.7 8.9 V10.8 Q2.7 13 5 13 M11.1 1 Q13.4 1 13.4 3.2 V5.1 Q13.4 7 15.3 7 Q13.4 7 13.4 8.9 V10.8 Q13.4 13 11.1 13" stroke="#f2c12e" stroke-width="1.5" fill="none"/><circle cx="5.6" cy="9.6" r="0.75" fill="#f2c12e"/><circle cx="8.05" cy="9.6" r="0.75" fill="#f2c12e"/><circle cx="10.5" cy="9.6" r="0.75" fill="#f2c12e"/></svg>
<div class="t" style="left:813.4px;top:123.5px;font-size:13.85px;line-height:20px;color:#b2b2b2;font-weight:400;letter-spacing:0px;">project.config.json</div>
<svg class="a" style="left:929px;top:126px;" width="10" height="14" viewBox="0 0 10 14" fill="none"><path d="M3 3 L7 7 L3 11" stroke="#aaa" stroke-width="1"/></svg>
<div class="t" style="left:943px;top:125.0px;font-size:11px;line-height:16px;color:#aaaaaa;font-weight:400;letter-spacing:-1.2px;font-family:'Liberation Mono',monospace;">{ }</div>
<div class="t" style="left:963.8px;top:123.5px;font-size:13.85px;line-height:20px;color:#b2b2b2;font-weight:400;letter-spacing:0px;">setting</div>
<div class="a" style="left:665px;top:144px;width:662px;height:620px;overflow:hidden">
<div class="a" style="left:56.0px;top:86px;width:700px;height:32px;background:#3b3b3b"></div>
<div class="a" style="left:55px;top:0;width:1px;height:535px;background:#454545"></div>
<div class="a" style="left:55px;top:535px;width:1px;height:32px;background:#b05ab8"></div>
<div class="a" style="left:55px;top:567px;width:1px;height:200px;background:#454545"></div>
<div class="a" style="left:73.70000000000005px;top:0;width:1px;height:118px;background:#b05ab8"></div>
<div class="a" style="left:73.70000000000005px;top:118px;width:1px;height:417px;background:#454545"></div>
<div class="a" style="left:92.89999999999998px;top:246px;width:1px;height:128px;background:#454545"></div>
<div class="a" style="left:112.10000000000002px;top:278px;width:1px;height:64px;background:#454545"></div>
<div class="a" style="left:73.70000000000005px;top:535px;width:10px;height:32px;border:1px solid #6e6e6e;background:#223026"></div>
<div class="t m" style="left:11px;width:18px;text-align:right;top:-8px;font-size:16px;line-height:32px;color:#5a5a5a">13</div>
<div class="t m" style="left:93.9px;top:-8px;font-size:16px;line-height:32px;color:#8fd3f5"><span style="color:#8fd3f5">}</span><span style="color:#8fd3f5">,</span></div>
<div class="t m" style="left:11px;width:18px;text-align:right;top:24px;font-size:16px;line-height:32px;color:#5a5a5a">14</div>
<div class="t m" style="left:93.9px;top:24px;font-size:16px;line-height:32px;color:#8fd3f5"><span style="color:#8fd3f5">&quot;</span><span style="color:#8fd3f5">coverView</span><span style="color:#8fd3f5">&quot;</span><span style="color:#8fd3f5">: </span><span style="color:#f3877a">false</span><span style="color:#8fd3f5">,</span></div>
<div class="t m" style="left:11px;width:18px;text-align:right;top:56px;font-size:16px;line-height:32px;color:#5a5a5a">15</div>
<div class="t m" style="left:93.9px;top:56px;font-size:16px;line-height:32px;color:#8fd3f5"><span style="color:#8fd3f5">&quot;</span><span style="color:#8fd3f5">postcss</span><span style="color:#8fd3f5">&quot;</span><span style="color:#8fd3f5">: </span><span style="color:#f3877a">false</span><span style="color:#8fd3f5">,</span></div>
<div class="t m" style="left:11px;width:18px;text-align:right;top:88px;font-size:16px;line-height:32px;color:#ffffff">16</div>
<div class="t m" style="left:93.9px;top:88px;font-size:16px;line-height:32px;color:#8fd3f5"><span style="color:#8fd3f5">&quot;</span><span style="color:#8fd3f5">minified</span><span style="color:#8fd3f5">&quot;</span><span style="color:#8fd3f5">: </span><span style="color:#f3877a">false</span><span style="color:#8fd3f5">,</span></div>
<div class="t m" style="left:11px;width:18px;text-align:right;top:120px;font-size:16px;line-height:32px;color:#5a5a5a">17</div>
<div class="t m" style="left:93.9px;top:120px;font-size:16px;line-height:32px;color:#8fd3f5"><span style="color:#8fd3f5">&quot;</span><span style="color:#8fd3f5">enhance</span><span style="color:#8fd3f5">&quot;</span><span style="color:#8fd3f5">: </span><span style="color:#f3877a">true</span><span style="color:#8fd3f5">,</span></div>
<div class="t m" style="left:11px;width:18px;text-align:right;top:152px;font-size:16px;line-height:32px;color:#5a5a5a">18</div>
<div class="t m" style="left:93.9px;top:152px;font-size:16px;line-height:32px;color:#8fd3f5"><span style="color:#8fd3f5">&quot;</span><span style="color:#8fd3f5">showShadowRootInWxmlPanel</span><span style="color:#8fd3f5">&quot;</span><span style="color:#8fd3f5">: </span><span style="color:#f3877a">false</span><span style="color:#8fd3f5">,</span></div>
<div class="t m" style="left:11px;width:18px;text-align:right;top:184px;font-size:16px;line-height:32px;color:#5a5a5a">19</div>
<div class="t m" style="left:93.9px;top:184px;font-size:16px;line-height:32px;color:#8fd3f5"><span style="color:#8fd3f5">&quot;</span><span style="color:#8fd3f5">packNpmManually</span><span style="color:#8fd3f5">&quot;</span><span style="color:#8fd3f5">: </span><span style="color:#f3877a">true</span><span style="color:#8fd3f5">,</span></div>
<div class="t m" style="left:11px;width:18px;text-align:right;top:216px;font-size:16px;line-height:32px;color:#5a5a5a">20</div>
<div class="t m" style="left:93.9px;top:216px;font-size:16px;line-height:32px;color:#8fd3f5"><span style="color:#8fd3f5">&quot;</span><span style="color:#8fd3f5">packNpmRelationList</span><span style="color:#8fd3f5">&quot;</span><span style="color:#8fd3f5">: </span><span style="color:#8fd3f5">[</span></div>
<div class="t m" style="left:11px;width:18px;text-align:right;top:248px;font-size:16px;line-height:32px;color:#5a5a5a">21</div>
<div class="t m" style="left:113.1px;top:248px;font-size:16px;line-height:32px;color:#8fd3f5"><span style="color:#f5c400">{</span></div>
<div class="t m" style="left:11px;width:18px;text-align:right;top:280px;font-size:16px;line-height:32px;color:#5a5a5a">22</div>
<div class="t m" style="left:132.3px;top:280px;font-size:16px;line-height:32px;color:#8fd3f5"><span style="color:#8fd3f5">&quot;</span><span style="color:#f39179">packageJsonPath</span><span style="color:#8fd3f5">&quot;</span><span style="color:#8fd3f5">: </span><span style="color:#8fd3f5">&quot;</span><span style="color:#f3877a">./package.json</span><span style="color:#8fd3f5">&quot;</span><span style="color:#8fd3f5">,</span></div>
<div class="t m" style="left:11px;width:18px;text-align:right;top:312px;font-size:16px;line-height:32px;color:#5a5a5a">23</div>
<div class="t m" style="left:132.3px;top:312px;font-size:16px;line-height:32px;color:#8fd3f5"><span style="color:#8fd3f5">&quot;</span><span style="color:#f39179">miniprogramNpmDistDir</span><span style="color:#8fd3f5">&quot;</span><span style="color:#8fd3f5">: </span><span style="color:#8fd3f5">&quot;</span><span style="color:#f3877a">./miniprogram/</span><span style="color:#8fd3f5">&quot;</span></div>
<div class="t m" style="left:11px;width:18px;text-align:right;top:344px;font-size:16px;line-height:32px;color:#5a5a5a">24</div>
<div class="t m" style="left:113.1px;top:344px;font-size:16px;line-height:32px;color:#8fd3f5"><span style="color:#f5c400">}</span></div>
<div class="t m" style="left:11px;width:18px;text-align:right;top:376px;font-size:16px;line-height:32px;color:#5a5a5a">25</div>
<div class="t m" style="left:93.9px;top:376px;font-size:16px;line-height:32px;color:#8fd3f5"><span style="color:#8fd3f5">]</span><span style="color:#8fd3f5">,</span></div>
<div class="t m" style="left:11px;width:18px;text-align:right;top:408px;font-size:16px;line-height:32px;color:#5a5a5a">26</div>
<div class="t m" style="left:93.9px;top:408px;font-size:16px;line-height:32px;color:#8fd3f5"><span style="color:#8fd3f5">&quot;</span><span style="color:#8fd3f5">ignoreUploadUnusedFiles</span><span style="color:#8fd3f5">&quot;</span><span style="color:#8fd3f5">: </span><span style="color:#f3877a">true</span><span style="color:#8fd3f5">,</span></div>
<div class="t m" style="left:11px;width:18px;text-align:right;top:440px;font-size:16px;line-height:32px;color:#5a5a5a">27</div>
<div class="t m" style="left:93.9px;top:440px;font-size:16px;line-height:32px;color:#8fd3f5"><span style="color:#8fd3f5">&quot;</span><span style="color:#8fd3f5">compileHotReLoad</span><span style="color:#8fd3f5">&quot;</span><span style="color:#8fd3f5">: </span><span style="color:#f3877a">false</span><span style="color:#8fd3f5">,</span></div>
<div class="t m" style="left:11px;width:18px;text-align:right;top:472px;font-size:16px;line-height:32px;color:#5a5a5a">28</div>
<div class="t m" style="left:93.9px;top:472px;font-size:16px;line-height:32px;color:#8fd3f5"><span style="color:#8fd3f5">&quot;</span><span style="color:#8fd3f5">skylineRenderEnable</span><span style="color:#8fd3f5">&quot;</span><span style="color:#8fd3f5">: </span><span style="color:#f3877a">true</span><span style="color:#8fd3f5">,</span></div>
<div class="t m" style="left:11px;width:18px;text-align:right;top:504px;font-size:16px;line-height:32px;color:#5a5a5a">29</div>
<div class="t m" style="left:93.9px;top:504px;font-size:16px;line-height:32px;color:#8fd3f5"><span style="color:#8fd3f5">&quot;</span><span style="color:#8fd3f5">es6</span><span style="color:#8fd3f5">&quot;</span><span style="color:#8fd3f5">: </span><span style="color:#f3877a">true</span></div>
<div class="t m" style="left:11px;width:18px;text-align:right;top:536px;font-size:16px;line-height:32px;color:#5a5a5a">30</div>
<div class="t m" style="left:74.7px;top:536px;font-size:16px;line-height:32px;color:#8fd3f5"><span style="color:#d46fdc">}</span><span style="color:#8fd3f5">,</span></div>
<div class="t m" style="left:11px;width:18px;text-align:right;top:568px;font-size:16px;line-height:32px;color:#5a5a5a">31</div>
<div class="t m" style="left:74.7px;top:568px;font-size:16px;line-height:32px;color:#8fd3f5"><span style="color:#8fd3f5">&quot;</span><span style="color:#d4d4d4">simulatorType</span><span style="color:#8fd3f5">&quot;</span><span style="color:#8fd3f5">: </span><span style="color:#8fd3f5">&quot;</span><span style="color:#f3877a">wechat</span><span style="color:#8fd3f5">&quot;</span><span style="color:#8fd3f5">,</span></div>
<div class="t m" style="left:11px;width:18px;text-align:right;top:600px;font-size:16px;line-height:32px;color:#5a5a5a">32</div>
<div class="t m" style="left:74.7px;top:600px;font-size:16px;line-height:32px;color:#8fd3f5"><span style="color:#8fd3f5">&quot;</span><span style="color:#d4d4d4">simulatorPluginLibVersion</span><span style="color:#8fd3f5">&quot;</span><span style="color:#8fd3f5">: </span><span style="color:#d46fdc">{}</span><span style="color:#8fd3f5">,</span></div>
</div>
<svg class="a" style="left:700px;top:360.5px;" width="14" height="14" viewBox="0 0 14 14" fill="none"><path d="M3 5 L7 9 L11 5" stroke="#9a9a9a" stroke-width="1.1"/></svg>
<svg class="a" style="left:700px;top:392.5px;" width="14" height="14" viewBox="0 0 14 14" fill="none"><path d="M3 5 L7 9 L11 5" stroke="#9a9a9a" stroke-width="1.1"/></svg>
<div class="a" style="left:665px;top:764px;width:662px;height:1px;background:#484848;"></div>
<div class="a" style="left:665px;top:765px;width:662px;height:29px;background:#333333;"></div>
<div class="t" style="left:685.5px;top:772.0px;font-size:11px;line-height:16px;color:#e8e8e8;font-weight:400;letter-spacing:0px;">调试器</div>
<div class="t" style="left:738.7px;top:772.0px;font-size:11px;line-height:16px;color:#8c8c8c;font-weight:400;letter-spacing:0px;">问题</div>
<div class="t" style="left:780px;top:772.0px;font-size:11px;line-height:16px;color:#8c8c8c;font-weight:400;letter-spacing:0px;">输出</div>
<div class="t" style="left:822px;top:772.0px;font-size:11px;line-height:16px;color:#8c8c8c;font-weight:400;letter-spacing:0px;">终端</div>
<div class="t" style="left:863.7px;top:772.0px;font-size:11px;line-height:16px;color:#8c8c8c;font-weight:400;letter-spacing:0px;">代码质量</div>
<div class="a" style="left:685px;top:792px;width:33px;height:2px;background:#d8d8d8;"></div>
<div class="a" style="left:665px;top:794px;width:662px;height:26px;background:#292a2d;"></div>
<div class="a" style="left:665px;top:819px;width:662px;height:1px;background:#3d3d3d;"></div>
<svg class="a" style="left:672px;top:799px;" width="18" height="18" viewBox="0 0 18 18" fill="none"><path d="M8 14.5 H3.5 V3.5 H14.5 V8" stroke="#a0a0a0" stroke-width="1.1"/><path d="M8.5 8.5 L15.5 11 L12.3 12.3 L15 15 L14 16 L11.3 13.3 L10 16.5 Z" fill="#a0a0a0"/></svg>
<div class="a" style="left:699.5px;top:799px;width:1px;height:16px;background:#4a4a4a;"></div>
<div class="a" style="left:760px;top:794px;width:68px;height:26px;background:#000000;"></div>
<div class="t" style="left:717.8px;top:798.0px;font-size:12.05px;line-height:18px;color:#e0e0e0;font-weight:400;letter-spacing:0px;">Wxml</div>
<div class="t" style="left:771.6px;top:798.0px;font-size:12.05px;line-height:18px;color:#ffffff;font-weight:400;letter-spacing:0px;">Console</div>
<div class="t" style="left:839.7px;top:798.0px;font-size:12.05px;line-height:18px;color:#e0e0e0;font-weight:400;letter-spacing:0px;">AppData</div>
<div class="t" style="left:910.5px;top:798.0px;font-size:12.05px;line-height:18px;color:#e0e0e0;font-weight:400;letter-spacing:0px;">Storage</div>
<div class="t" style="left:976.4px;top:798.0px;font-size:12.05px;line-height:18px;color:#e0e0e0;font-weight:400;letter-spacing:0px;">Sources</div>
<div class="t" style="left:1044.3px;top:798.0px;font-size:12.05px;line-height:18px;color:#e0e0e0;font-weight:400;letter-spacing:0px;">Network</div>
<div class="t" style="left:1113.5px;top:798.0px;font-size:12.05px;line-height:18px;color:#e0e0e0;font-weight:400;letter-spacing:0px;">Performance</div>
<div class="t" style="left:1206px;top:798.0px;font-size:12.05px;line-height:18px;color:#e0e0e0;font-weight:400;letter-spacing:0px;">Memory</div>
<div class="t" style="left:1274.5px;top:798.0px;font-size:12.05px;line-height:18px;color:#e0e0e0;font-weight:400;letter-spacing:0px;">Security</div>
<div class="a" style="left:665px;top:820px;width:662px;height:27px;background:#292a2d;"></div>
<div class="a" style="left:665px;top:846px;width:662px;height:1px;background:#3d3d3d;"></div>
<svg class="a" style="left:672px;top:825px;" width="18" height="18" viewBox="0 0 18 18" fill="none"><rect x="1.5" y="2.5" width="14" height="12" stroke="#a0a0a0" stroke-width="1"/><line x1="5" y1="2.5" x2="5" y2="14.5" stroke="#a0a0a0" stroke-width="1"/><path d="M8 5.5 L12 8.5 L8 11.5 Z" fill="#a0a0a0"/></svg>
<svg class="a" style="left:700px;top:825px;" width="18" height="18" viewBox="0 0 18 18" fill="none"><circle cx="9" cy="9" r="5.5" stroke="#a0a0a0" stroke-width="1.6"/><line x1="5.2" y1="5.2" x2="12.8" y2="12.8" stroke="#a0a0a0" stroke-width="1.6"/></svg>
<div class="a" style="left:728px;top:826px;width:1px;height:16px;background:#4a4a4a;"></div>
<div class="t" style="left:737px;top:825.0px;font-size:12.5px;line-height:18px;color:#e0e0e0;font-weight:400;letter-spacing:0px;">top</div>
<div class="a" style="left:857px;top:830px;width:0;height:0;border-left:4px solid transparent;border-right:4px solid transparent;border-top:6px solid #a0a0a0"></div>
<div class="a" style="left:874px;top:826px;width:1px;height:16px;background:#4a4a4a;"></div>
<svg class="a" style="left:883px;top:825px;" width="20" height="18" viewBox="0 0 20 18" fill="none"><path d="M2 9 Q10 1.5 18 9 Q10 16.5 2 9 Z" fill="#a0a0a0"/><circle cx="10" cy="9" r="3.3" fill="#292a2d"/><circle cx="10" cy="9" r="1.6" fill="#a0a0a0"/></svg>
<div class="a" style="left:911px;top:826px;width:1px;height:16px;background:#4a4a4a;"></div>
<div class="a" style="left:918px;top:824px;width:231px;height:20px;border:1px solid #4a4a4a;background:#202124"></div>
<div class="t" style="left:922.5px;top:825.0px;font-size:12px;line-height:18px;color:#d0d0d0;font-weight:400;letter-spacing:0px;">Filter</div>
<div class="t" style="left:1157.5px;top:825.0px;font-size:11.8px;line-height:17px;color:#d0d0d0;font-weight:400;letter-spacing:0px;">Default levels</div>
<div class="a" style="left:1235px;top:831px;width:0;height:0;border-left:4px solid transparent;border-right:4px solid transparent;border-top:6px solid #909090"></div>
<div class="a" style="left:665px;top:847px;width:662px;height:203px;background:#242424;"></div>
<div class="a" style="left:665px;top:847px;width:662px;height:39px;background:#332b00;"></div>
<div class="a" style="left:665px;top:847px;width:662px;height:1px;background:#665500;"></div>
<div class="a" style="left:665px;top:866.5px;width:662px;height:1px;background:#665500;"></div>
<div class="a" style="left:665px;top:885.5px;width:662px;height:1px;background:#665500;"></div>
<svg class="a" style="left:670px;top:850px;" width="14" height="14" viewBox="0 0 14 14" fill="none"><path d="M7 1.5 L13 12.5 H1 Z" fill="#f2c200"/><rect x="6.4" y="5" width="1.2" height="4.3" fill="#332b00"/><rect x="6.4" y="10" width="1.2" height="1.2" fill="#332b00"/></svg>
<svg class="a" style="left:670px;top:869.5px;" width="14" height="14" viewBox="0 0 14 14" fill="none"><path d="M7 1.5 L13 12.5 H1 Z" fill="#f2c200"/><rect x="6.4" y="5" width="1.2" height="4.3" fill="#332b00"/><rect x="6.4" y="10" width="1.2" height="1.2" fill="#332b00"/></svg>
<div class="t" style="left:689px;top:850.0px;font-size:11px;line-height:16px;color:#ebe8dc;font-weight:400;letter-spacing:0px;font-family:'Liberation Mono',monospace;">[自动热重载] 已开启代码文件保存后自动热重载 (不支持 json)</div>
<div class="a" style="left:691px;top:873px;width:0;height:0;border-top:3.5px solid transparent;border-bottom:3.5px solid transparent;border-left:4.5px solid #a09880"></div>
<div class="t" style="left:699px;top:869.5px;font-size:11px;line-height:16px;color:#ebe8dc;font-weight:400;letter-spacing:0px;font-family:'Liberation Mono',monospace;">无效的 app.json [&quot;componentFramework&quot;]</div>
<div class="a" style="left:665px;top:905px;width:662px;height:1px;background:#3a3a3a;"></div>
<div class="a" style="left:665px;top:924.4px;width:662px;height:1px;background:#3a3a3a;"></div>
<div class="a" style="left:665px;top:943px;width:662px;height:1px;background:#3a3a3a;"></div>
<div class="a" style="left:665px;top:974px;width:662px;height:1px;background:#3a3a3a;"></div>
<div class="t" style="left:689px;top:888.0px;font-size:11px;line-height:16px;color:#e0e0e0;font-weight:400;letter-spacing:0px;font-family:'Liberation Mono',monospace;">[system] WeChatLib: 3.6.2 (2024.10.18 15:29:53)</div>
<div class="t" style="left:689px;top:907.0px;font-size:11px;line-height:16px;color:#e0e0e0;font-weight:400;letter-spacing:0px;font-family:'Liberation Mono',monospace;">[system] Subpackages: N/A</div>
<div class="t" style="left:689px;top:926.0px;font-size:11px;line-height:16px;color:#e0e0e0;font-weight:400;letter-spacing:0px;font-family:'Liberation Mono',monospace;">[system] LazyCodeLoading: true</div>
<div class="a" style="left:665px;top:945px;width:662px;height:30px;overflow:hidden">
<div class="t" style="left:24px;top:0.0px;font-size:11px;line-height:16px;color:#e0e0e0;font-weight:400;letter-spacing:0px;font-family:'Liberation Mono',monospace;">Current Wechat version do not support asynchronous getSystemInfo. &quot;wx.getSystemInfoAsync&quot; will be</div>
<div class="t" style="left:24px;top:13.0px;font-size:11px;line-height:16px;color:#e0e0e0;font-weight:400;letter-spacing:0px;font-family:'Liberation Mono',monospace;">synchronous implementation.</div>
</div>
<svg class="a" style="left:672px;top:977px;" width="10" height="14" viewBox="0 0 10 14" fill="none"><path d="M3 4 L7 7.5 L3 11" stroke="#4d90fe" stroke-width="1.3"/></svg>
<div class="a" style="left:1327px;top:92px;width:1px;height:987px;background:#3f3f3f;"></div>
<div class="a" style="left:435px;top:1051px;width:892px;height:28px;background:#393939;"></div>
<svg class="a" style="left:450px;top:1059px;" width="14" height="14" viewBox="0 0 14 14" fill="none"><circle cx="7" cy="7" r="5.8" stroke="#b8b8b8" stroke-width="1"/><path d="M4.8 4.8 L9.2 9.2 M9.2 4.8 L4.8 9.2" stroke="#b8b8b8" stroke-width="1"/></svg>
<div class="t" style="left:467.5px;top:1055.5px;font-size:12.8px;line-height:19px;color:#c0c0c0;font-weight:400;letter-spacing:0px;">0</div>
<svg class="a" style="left:479px;top:1058px;" width="14" height="14" viewBox="0 0 14 14" fill="none"><path d="M7 1.5 L13 12.5 H1 Z" stroke="#b8b8b8" stroke-width="1"/><path d="M7 5.3 V9 M7 10.2 V11" stroke="#b8b8b8" stroke-width="1"/></svg>
<div class="t" style="left:495.5px;top:1055.5px;font-size:12.8px;line-height:19px;color:#c0c0c0;font-weight:400;letter-spacing:0px;">0</div>
<svg class="a" style="left:523.5px;top:1058.5px;" width="14" height="14" viewBox="0 0 14 14" fill="none"><line x1="10.00" y1="7.00" x2="12.50" y2="7.00" stroke="rgba(200,200,200,0.25)" stroke-width="1.3" stroke-linecap="round"/><line x1="9.12" y1="9.12" x2="10.89" y2="10.89" stroke="rgba(200,200,200,0.34)" stroke-width="1.3" stroke-linecap="round"/><line x1="7.00" y1="10.00" x2="7.00" y2="12.50" stroke="rgba(200,200,200,0.43)" stroke-width="1.3" stroke-linecap="round"/><line x1="4.88" y1="9.12" x2="3.11" y2="10.89" stroke="rgba(200,200,200,0.52)" stroke-width="1.3" stroke-linecap="round"/><line x1="4.00" y1="7.00" x2="1.50" y2="7.00" stroke="rgba(200,200,200,0.61)" stroke-width="1.3" stroke-linecap="round"/><line x1="4.88" y1="4.88" x2="3.11" y2="3.11" stroke="rgba(200,200,200,0.70)" stroke-width="1.3" stroke-linecap="round"/><line x1="7.00" y1="4.00" x2="7.00" y2="1.50" stroke="rgba(200,200,200,0.79)" stroke-width="1.3" stroke-linecap="round"/><line x1="9.12" y1="4.88" x2="10.89" y2="3.11" stroke="rgba(200,200,200,0.88)" stroke-width="1.3" stroke-linecap="round"/></svg>
<div class="t" style="left:547px;top:1056.5px;font-size:12px;line-height:18px;color:#bdbdbd;font-weight:400;letter-spacing:0px;">285 编译 miniprogram_npm/tdesign-miniprogram/back-top/back-top.js</div>
<div class="a" style="left:1328px;top:92px;width:400px;height:987px;background:#2e2e2e;"></div>
<div class="t" style="left:1352px;top:114.0px;font-size:13px;line-height:19px;color:#dcdcdc;font-weight:400;letter-spacing:0px;">基本信息</div>
<div class="t" style="left:1452px;top:114.0px;font-size:13px;line-height:19px;color:#dcdcdc;font-weight:400;letter-spacing:0px;">性能分析</div>
<div class="t" style="left:1551.4px;top:114.0px;font-size:13px;line-height:19px;color:#ffffff;font-weight:500;letter-spacing:0px;">本地设置</div>
<div class="t" style="left:1651.8px;top:114.0px;font-size:13px;line-height:19px;color:#dcdcdc;font-weight:400;letter-spacing:0px;">项目配置</div>
<div class="a" style="left:1538px;top:145.5px;width:80px;height:1.5px;background:#707070;"></div>
<div class="a" style="left:1530px;top:108px;width:97px;height:48px;border:3px solid #f70505"></div>
<div class="t" style="left:1360px;top:183.0px;font-size:12.9px;line-height:19px;color:#bdbdbd;font-weight:400;letter-spacing:0px;">调试基础库</div>
<svg class="a" style="left:1427px;top:185px;" width="16" height="16" viewBox="0 0 16 16" fill="none"><circle cx="8" cy="8" r="6.3" stroke="#9a9a9a" stroke-width="1"/><path d="M6 6.3 a2 2 0 1 1 2.8 1.8 q-0.8 0.4 -0.8 1.4 v0.5" stroke="#9a9a9a" stroke-width="1"/><circle cx="8" cy="11.5" r="0.6" fill="#9a9a9a"/></svg>
<div class="a" style="left:1499px;top:181px;width:120px;height:22px;border-radius:3px;background:#4a4a4a"></div>
<div class="t" style="left:1522.8px;top:183.0px;font-size:12.2px;line-height:18px;color:#f2f2f2;font-weight:400;letter-spacing:0px;">3.6.2</div>
<div class="t" style="left:1569.5px;top:183.5px;font-size:11.7px;line-height:17px;color:#9c9c9c;font-weight:400;letter-spacing:0px;">灰度中</div>
<div class="a" style="left:1624px;top:181px;width:72px;height:22px;border-radius:3px;background:#4a4a4a"></div>
<div class="t" style="left:1648px;top:183.0px;font-size:12px;line-height:18px;color:#f4f4f4;font-weight:500;letter-spacing:0px;">推送</div>
<div class="t" style="left:1360px;top:219.0px;font-size:10.9px;line-height:16px;color:#9a9a9a;font-weight:400;letter-spacing:0px;">该基础库支持微信客户端</div>
<div class="t" style="left:1360px;top:240.3px;font-size:11.4px;line-height:17px;color:#a8a8a8;font-weight:400;letter-spacing:0px;">iOS</div>
<div class="t" style="left:1652px;top:239.8px;font-size:10.8px;line-height:16px;color:#a0a0a0;font-weight:400;letter-spacing:0px;">暂不支持</div>
<div class="a" style="left:1360px;top:258.5px;width:336px;height:1px;background:#3a3a3a;"></div>
<div class="t" style="left:1360px;top:265.3px;font-size:11.4px;line-height:17px;color:#a8a8a8;font-weight:400;letter-spacing:0px;">Android</div>
<div class="t" style="left:1652px;top:264.8px;font-size:10.8px;line-height:16px;color:#a0a0a0;font-weight:400;letter-spacing:0px;">暂不支持</div>
<div class="a" style="left:1360px;top:283.5px;width:336px;height:1px;background:#3a3a3a;"></div>
<div class="t" style="left:1360px;top:290.3px;font-size:11.4px;line-height:17px;color:#a8a8a8;font-weight:400;letter-spacing:0px;">MacOS</div>
<div class="t" style="left:1652px;top:289.8px;font-size:10.8px;line-height:16px;color:#a0a0a0;font-weight:400;letter-spacing:0px;">暂不支持</div>
<div class="a" style="left:1360px;top:308.5px;width:336px;height:1px;background:#3a3a3a;"></div>
<div class="t" style="left:1360px;top:315.3px;font-size:11.4px;line-height:17px;color:#a8a8a8;font-weight:400;letter-spacing:0px;">Windows</div>
<div class="t" style="left:1652px;top:314.8px;font-size:10.8px;line-height:16px;color:#a0a0a0;font-weight:400;letter-spacing:0px;">暂不支持</div>
<div class="a" style="left:1360px;top:333.5px;width:336px;height:1px;background:#3a3a3a;"></div>
<div class="a" style="left:1360px;top:368px;width:14px;height:14px;border-radius:2px;background:#07c160"></div>
<svg class="a" style="left:1360px;top:368px;" width="14" height="14" viewBox="0 0 14 14" fill="none"><path d="M3.3 7.2 L6 9.9 L10.9 4.3" stroke="#fff" stroke-width="1.5" fill="none"/></svg>
<div class="t" style="left:1384px;top:365.5px;font-size:13px;line-height:19px;color:#d6d6d6;font-weight:400;letter-spacing:0px;">将 JS 编译成 ES5</div>
<div class="a" style="left:1360px;top:398px;width:14px;height:14px;border-radius:2px;background:#3e3e3e;border:1px solid #5a5a5a"></div>
<div class="t" style="left:1384px;top:395.5px;font-size:13px;line-height:19px;color:#d6d6d6;font-weight:400;letter-spacing:0px;">上传代码时样式自动补全</div>
<div class="a" style="left:1360px;top:428px;width:14px;height:14px;border-radius:2px;background:#07c160"></div>
<svg class="a" style="left:1360px;top:428px;" width="14" height="14" viewBox="0 0 14 14" fill="none"><path d="M3.3 7.2 L6 9.9 L10.9 4.3" stroke="#fff" stroke-width="1.5" fill="none"/></svg>
<div class="t" style="left:1384px;top:425.5px;font-size:13px;line-height:19px;color:#d6d6d6;font-weight:400;letter-spacing:0px;">上传代码时自动压缩样式文件</div>
<div class="a" style="left:1360px;top:458px;width:14px;height:14px;border-radius:2px;background:#3e3e3e;border:1px solid #5a5a5a"></div>
<div class="t" style="left:1384px;top:455.5px;font-size:13px;line-height:19px;color:#d6d6d6;font-weight:400;letter-spacing:0px;">上传代码时自动压缩脚本文件</div>
<div class="a" style="left:1360px;top:488px;width:14px;height:14px;border-radius:2px;background:#07c160"></div>
<svg class="a" style="left:1360px;top:488px;" width="14" height="14" viewBox="0 0 14 14" fill="none"><path d="M3.3 7.2 L6 9.9 L10.9 4.3" stroke="#fff" stroke-width="1.5" fill="none"/></svg>
<div class="t" style="left:1384px;top:485.5px;font-size:13px;line-height:19px;color:#d6d6d6;font-weight:400;letter-spacing:0px;">上传代码时自动压缩wxml文件</div>
<div class="a" style="left:1360px;top:518px;width:14px;height:14px;border-radius:2px;background:#07c160"></div>
<svg class="a" style="left:1360px;top:518px;" width="14" height="14" viewBox="0 0 14 14" fill="none"><path d="M3.3 7.2 L6 9.9 L10.9 4.3" stroke="#fff" stroke-width="1.5" fill="none"/></svg>
<div class="t" style="left:1384px;top:515.5px;font-size:13px;line-height:19px;color:#d6d6d6;font-weight:400;letter-spacing:0px;">上传时过滤无依赖文件</div>
<div class="a" style="left:1360px;top:548px;width:14px;height:14px;border-radius:2px;background:#3e3e3e;border:1px solid #5a5a5a"></div>
<div class="t" style="left:1384px;top:545.5px;font-size:13px;line-height:19px;color:#d6d6d6;font-weight:400;letter-spacing:0px;">上传时进行代码保护</div>
<div class="a" style="left:1360px;top:578px;width:14px;height:14px;border-radius:2px;background:#3e3e3e;border:1px solid #5a5a5a"></div>
<div class="t" style="left:1384px;top:575.5px;font-size:13px;line-height:19px;color:#d6d6d6;font-weight:400;letter-spacing:0px;">自动运行体验评分</div>
<div class="a" style="left:1360px;top:608px;width:14px;height:14px;border-radius:2px;background:#3e3e3e;border:1px solid #5a5a5a"></div>
<div class="t" style="left:1384px;top:605.5px;font-size:13px;line-height:19px;color:#d6d6d6;font-weight:400;letter-spacing:0px;">不校验合法域名、web-view（业务域名）、TLS</div>
<div class="a" style="left:1360px;top:658px;width:14px;height:14px;border-radius:2px;background:#3e3e3e;border:1px solid #5a5a5a"></div>
<div class="t" style="left:1384px;top:655.5px;font-size:13px;line-height:19px;color:#d6d6d6;font-weight:400;letter-spacing:0px;">预览及真机调试时主包、分包体积上限调整为4M</div>
<div class="a" style="left:1360px;top:688px;width:14px;height:14px;border-radius:2px;background:#3e3e3e;border:1px solid #5a5a5a"></div>
<div class="t" style="left:1384px;top:685.5px;font-size:13px;line-height:19px;color:#d6d6d6;font-weight:400;letter-spacing:0px;">启用数据预拉取</div>
<div class="a" style="left:1360px;top:718px;width:14px;height:14px;border-radius:2px;background:#07c160"></div>
<svg class="a" style="left:1360px;top:718px;" width="14" height="14" viewBox="0 0 14 14" fill="none"><path d="M3.3 7.2 L6 9.9 L10.9 4.3" stroke="#fff" stroke-width="1.5" fill="none"/></svg>
<div class="t" style="left:1384px;top:715.5px;font-size:13px;line-height:19px;color:#d6d6d6;font-weight:400;letter-spacing:0px;">启用代码自动热重载（不支持 json 文件)</div>
<div class="a" style="left:1360px;top:748px;width:14px;height:14px;border-radius:2px;background:#3e3e3e;border:1px solid #5a5a5a"></div>
<div class="t" style="left:1384px;top:745.5px;font-size:13px;line-height:19px;color:#d6d6d6;font-weight:400;letter-spacing:0px;">懒注入占位组件调试</div>
<div class="a" style="left:1360px;top:778px;width:14px;height:14px;border-radius:2px;background:#07c160"></div>
<svg class="a" style="left:1360px;top:778px;" width="14" height="14" viewBox="0 0 14 14" fill="none"><path d="M3.3 7.2 L6 9.9 L10.9 4.3" stroke="#fff" stroke-width="1.5" fill="none"/></svg>
<div class="t" style="left:1384px;top:775.5px;font-size:13px;line-height:19px;color:#d6d6d6;font-weight:400;letter-spacing:0px;">启用多核心编译</div>
<div class="a" style="left:1360px;top:808px;width:14px;height:14px;border-radius:2px;background:#07c160"></div>
<svg class="a" style="left:1360px;top:808px;" width="14" height="14" viewBox="0 0 14 14" fill="none"><path d="M3.3 7.2 L6 9.9 L10.9 4.3" stroke="#fff" stroke-width="1.5" fill="none"/></svg>
<div class="t" style="left:1384px;top:805.5px;font-size:13px;line-height:19px;color:#d6d6d6;font-weight:400;letter-spacing:0px;">启用独立域进行调试</div>
<div class="a" style="left:1360px;top:838px;width:14px;height:14px;border-radius:2px;background:#3e3e3e;border:1px solid #5a5a5a"></div>
<div class="t" style="left:1384px;top:835.5px;font-size:13px;line-height:19px;color:#d6d6d6;font-weight:400;letter-spacing:0px;">启用自定义处理命令</div>
<div class="t" style="left:1384px;top:625.5px;font-size:13px;line-height:19px;color:#d6d6d6;font-weight:400;letter-spacing:0px;">版本以及 HTTPS 证书</div>
<div class="a" style="left:1343px;top:359px;width:163px;height:35px;border:3px solid #f70505"></div>
<svg class="a" style="left:0px;top:0px;" width="11" height="11" viewBox="0 0 11 11" fill="none"><path d="M0 0 L11 0 A11 11 0 0 0 0 11 Z" fill="#000"/></svg>
<svg class="a" style="left:1717px;top:0px;" width="11" height="11" viewBox="0 0 11 11" fill="none"><path d="M11 0 L0 0 A11 11 0 0 1 11 11 Z" fill="#000"/></svg>
<svg class="a" style="left:0px;top:1068px;" width="11" height="11" viewBox="0 0 11 11" fill="none"><path d="M0 11 L11 11 A11 11 0 0 1 0 0 Z" fill="#000"/></svg>
<svg class="a" style="left:1717px;top:1068px;" width="11" height="11" viewBox="0 0 11 11" fill="none"><path d="M11 11 L0 11 A11 11 0 0 0 11 0 Z" fill="#000"/></svg>
</body></html>
